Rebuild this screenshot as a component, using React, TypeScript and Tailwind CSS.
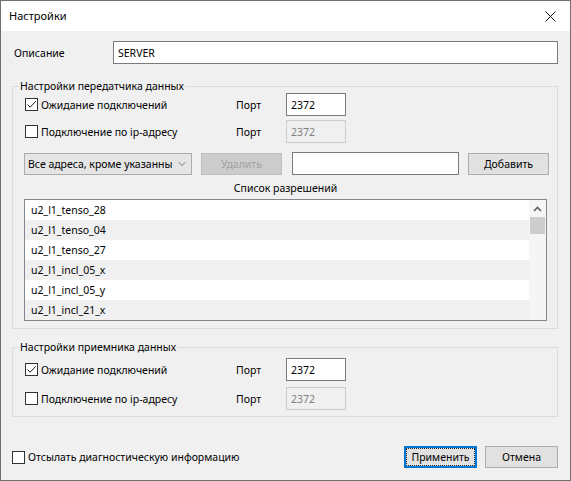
import { ChevronDown } from 'lucide-react';

interface CheckBoxProps {
    checked?: boolean;
    label: string;
}

function CheckBox({ checked, label }: CheckBoxProps) {
    return (
        <div className="flex items-center">
            <span className="flex h-[13px] w-[13px] shrink-0 items-center justify-center border border-[#333333] bg-white">
                {checked && (
                    <svg width="11" height="11" viewBox="0 0 11 11">
                        <path d="M1.5 5.5 L4.2 8.2 L9.8 2.2" fill="none" stroke="#222" strokeWidth="1" />
                    </svg>
                )}
            </span>
            <span className="ml-[3px] whitespace-nowrap">{label}</span>
        </div>
    );
}

function TextBox({ value, disabled, className }: { value?: string; disabled?: boolean; className?: string }) {
    return (
        <div
            className={
                'flex h-[23px] items-center px-[4px] ' +
                (disabled ? 'border border-[#cccccc] bg-[#f0f0f0] text-[#808080] ' : 'border border-[#7a7a7a] bg-white ') +
                (className ?? '')
            }
        >
            {value}
        </div>
    );
}

function Button({ label, disabled, className }: { label: string; disabled?: boolean; className?: string }) {
    return (
        <button
            type="button"
            className={
                'flex h-[22px] items-center justify-center ' +
                (disabled ? 'border border-[#bfbfbf] bg-[#cccccc] text-[#a0a0a0] ' : 'border border-[#adadad] bg-[#e1e1e1] ') +
                (className ?? '')
            }
        >
            {label}
        </button>
    );
}

// Port row: checkbox + label, "Порт", port box
function PortRow({ checked, label, disabled }: { checked?: boolean; label: string; disabled?: boolean }) {
    return (
        <div className="flex h-[23px] items-center pl-[12px]">
            <div className="w-[211px]">
                <CheckBox checked={checked} label={label} />
            </div>
            <span className="w-[50px]">Порт</span>
            <TextBox value="2372" disabled={disabled} className="w-[60px]" />
        </div>
    );
}

const permissions = [
    'u2_l1_tenso_28',
    'u2_l1_tenso_04',
    'u2_l1_tenso_27',
    'u2_l1_incl_05_x',
    'u2_l1_incl_05_y',
    'u2_l1_incl_21_x',
];

export default function App() {
    return (
        <div className="flex h-[481px] w-[571px] flex-col border border-[#6f6f6f] bg-[#f0f0f0] font-['Noto_Sans',sans-serif] text-[10.5px] leading-[16px] text-black">
            {/* Title bar */}
            <div className="flex h-[30px] shrink-0 items-center justify-between bg-white pl-[8px] pr-[14px]">
                <span className="text-[11px]">Настройки</span>
                <svg width="11" height="11" viewBox="0 0 11 11">
                    <path d="M0.5 0.5 L10.5 10.5 M10.5 0.5 L0.5 10.5" stroke="#111" strokeWidth="1" />
                </svg>
            </div>

            <div className="flex flex-1 flex-col pl-[11px] pr-[12px]">
                {/* Description */}
                <div className="mt-[10px] flex items-center">
                    <span className="w-[101px] pl-[2px]">Описание</span>
                    <TextBox value="SERVER" className="flex-1" />
                </div>

                {/* Transmitter settings */}
                <fieldset className="mt-[15px] border border-[#dcdcdc] pb-[7px]">
                    <legend className="ml-[6px] px-[1px] leading-[14px]">Настройки передатчика данных</legend>
                    <PortRow checked label="Ожидание подключений" />
                    <div className="mt-[4px]">
                        <PortRow label="Подключение по ip-адресу" disabled />
                    </div>

                    <div className="mt-[9px] flex items-center pl-[11px]">
                        <div className="flex h-[22px] w-[168px] items-center justify-between border border-[#acacac] bg-[#e5e5e5] pl-[3px] pr-[3px]">
                            <span className="overflow-hidden whitespace-nowrap">Все адреса, кроме указанны</span>
                            <ChevronDown className="h-[12px] w-[12px] shrink-0 text-[#555]" strokeWidth={1.5} />
                        </div>
                        <Button label="Удалить" disabled className="ml-[9px] w-[81px]" />
                        <TextBox className="ml-[10px] w-[167px]" />
                        <Button label="Добавить" className="ml-[9px] w-[81px]" />
                    </div>

                    <div className="mt-[5px] w-[523px] pl-[11px] text-center">
                        <span className="pl-[11px]">Список разрешений</span>
                    </div>

                    {/* Permissions list */}
                    <div className="ml-[11px] mt-[3px] flex h-[122px] w-[523px] border border-[#828790] bg-white">
                        <div className="flex-1 overflow-hidden">
                            {permissions.map((p, i) => (
                                <div key={p} className={'flex h-[20px] items-center pl-[6px] ' + (i % 2 ? 'bg-[#f0f0f0]' : 'bg-white')}>
                                    {p}
                                </div>
                            ))}
                        </div>
                        <div className="flex w-[17px] flex-col bg-[#f5f5f5]">
                            <div className="flex h-[17px] items-center justify-center">
                                <svg width="9" height="6" viewBox="0 0 9 6">
                                    <path d="M1 5 L4.5 1.5 L8 5" fill="none" stroke="#606060" strokeWidth="1.6" />
                                </svg>
                            </div>
                            <div className="mx-[1px] h-[17px] bg-[#cdcdcd]" />
                        </div>
                    </div>
                </fieldset>

                {/* Receiver settings */}
                <fieldset className="mt-[11px] border border-[#dcdcdc] pb-[6px]">
                    <legend className="ml-[6px] px-[1px] leading-[14px]">Настройки приемника данных</legend>
                    <div className="mt-[4px]">
                        <PortRow checked label="Ожидание подключений" />
                    </div>
                    <div className="mt-[6px]">
                        <PortRow label="Подключение по ip-адресу" disabled />
                    </div>
                </fieldset>

                {/* Footer */}
                <div className="mt-[29px] flex items-center justify-between">
                    <CheckBox label="Отсылать диагностическую информацию" />
                    <div className="flex gap-[8px]">
                        <button
                            type="button"
                            className="flex h-[22px] w-[73px] items-center justify-center border-2 border-[#0078d7] bg-[#e1e1e1]"
                        >
                            <span className="flex h-full w-full items-center justify-center border border-dotted border-[#222]">
                                Применить
                            </span>
                        </button>
                        <Button label="Отмена" className="w-[73px]" />
                    </div>
                </div>
            </div>
        </div>
    );
}
